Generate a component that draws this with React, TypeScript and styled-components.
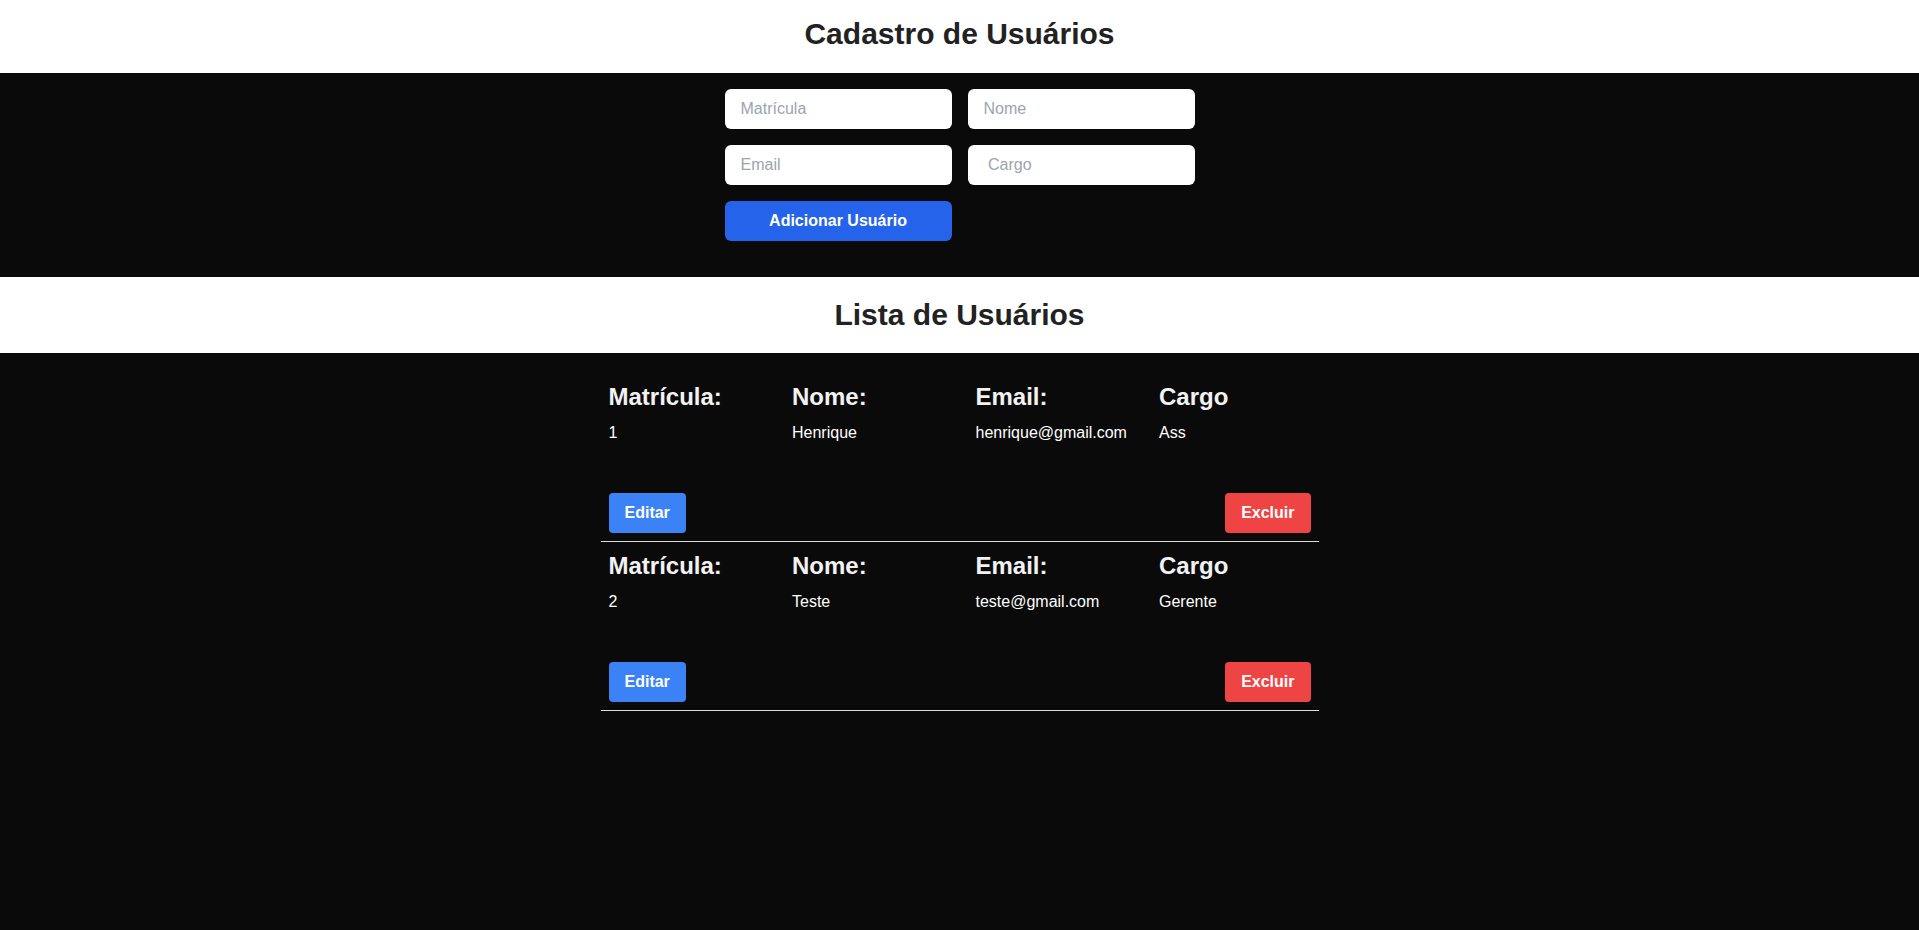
import React from "react";
import styled, { createGlobalStyle } from "styled-components";

const GlobalStyle = createGlobalStyle`
  html, body {
    margin: 0;
    padding: 0;
    background: #0a0a0a;
    font-family: "Liberation Sans", Arial, sans-serif;
  }
  * { box-sizing: border-box; }
`;

const Page = styled.div`
  min-height: 930px;
  background: #0a0a0a;
`;

const TitleBar = styled.header<{ $top: number; $bottom: number }>`
  background: #ffffff;
  padding: ${(p) => p.$top}px 0 ${(p) => p.$bottom}px;
  text-align: center;
`;

const Title = styled.h1`
  margin: 0;
  font-size: 30px;
  line-height: 36px;
  font-weight: 700;
  color: #222222;
`;

const FormSection = styled.section`
  padding: 16px 0 36px;
`;

const FormGrid = styled.form`
  display: grid;
  grid-template-columns: 227px 227px;
  gap: 16px;
  justify-content: center;
`;

const Input = styled.input`
  height: 40px;
  border: none;
  border-radius: 6px;
  padding: 0 16px;
  background: #ffffff;
  font-family: "Liberation Sans", Arial, sans-serif;
  font-size: 16px;
  color: #111827;
  outline: none;
  &::placeholder {
    color: #9ca3af;
  }
`;

const SubmitButton = styled.button`
  height: 40px;
  border: none;
  border-radius: 6px;
  background: #2563eb;
  color: #ffffff;
  font-family: "Liberation Sans", Arial, sans-serif;
  font-size: 16px;
  font-weight: 700;
  cursor: pointer;
`;

const List = styled.ul`
  list-style: none;
  width: 718px;
  margin: 20px auto 0;
  padding: 0;
`;

const Entry = styled.li`
  padding: 8px;
  border-bottom: 1px solid #dddddd;
`;

const Fields = styled.div`
  display: grid;
  grid-template-columns: repeat(4, 1fr);
  column-gap: 32px;
`;

const Field = styled.div`
  display: flex;
  flex-direction: column;
`;

const Label = styled.h3`
  margin: 0 0 8px;
  font-size: 24px;
  line-height: 32px;
  font-weight: 700;
  color: #f2f2f2;
`;

const Value = styled.p`
  margin: 0;
  font-size: 16px;
  line-height: 24px;
  color: #ffffff;
`;

const Actions = styled.div`
  display: flex;
  justify-content: space-between;
  margin-top: 48px;
`;

const ActionButton = styled.button<{ $variant: "edit" | "delete" }>`
  height: 40px;
  padding: 0 16px;
  border: none;
  border-radius: 4px;
  background: ${(p) => (p.$variant === "edit" ? "#3b82f6" : "#ef4444")};
  color: #ffffff;
  font-family: "Liberation Sans", Arial, sans-serif;
  font-size: 16px;
  font-weight: 700;
  cursor: pointer;
`;

type User = { matricula: string; nome: string; email: string; cargo: string };

const users: User[] = [
  { matricula: "1", nome: "Henrique", email: "henrique@gmail.com", cargo: "Ass" },
  { matricula: "2", nome: "Teste", email: "teste@gmail.com", cargo: "Gerente" },
];

export default function App() {
  return (
    <Page>
      <GlobalStyle />
      <TitleBar $top={16} $bottom={21}>
        <Title>Cadastro de Usuários</Title>
      </TitleBar>
      <FormSection>
        <FormGrid onSubmit={(e) => e.preventDefault()}>
          <Input placeholder="Matrícula" />
          <Input placeholder="Nome" />
          <Input placeholder="Email" />
          <Input placeholder=" Cargo" />
          <SubmitButton type="submit">Adicionar Usuário</SubmitButton>
        </FormGrid>
      </FormSection>
      <TitleBar $top={20} $bottom={20}>
        <Title>Lista de Usuários</Title>
      </TitleBar>
      <List>
        {users.map((u) => (
          <Entry key={u.matricula}>
            <Fields>
              <Field>
                <Label>Matrícula:</Label>
                <Value>{u.matricula}</Value>
              </Field>
              <Field>
                <Label>Nome:</Label>
                <Value>{u.nome}</Value>
              </Field>
              <Field>
                <Label>Email:</Label>
                <Value>{u.email}</Value>
              </Field>
              <Field>
                <Label>Cargo</Label>
                <Value>{u.cargo}</Value>
              </Field>
            </Fields>
            <Actions>
              <ActionButton $variant="edit">Editar</ActionButton>
              <ActionButton $variant="delete">Excluir</ActionButton>
            </Actions>
          </Entry>
        ))}
      </List>
    </Page>
  );
}
